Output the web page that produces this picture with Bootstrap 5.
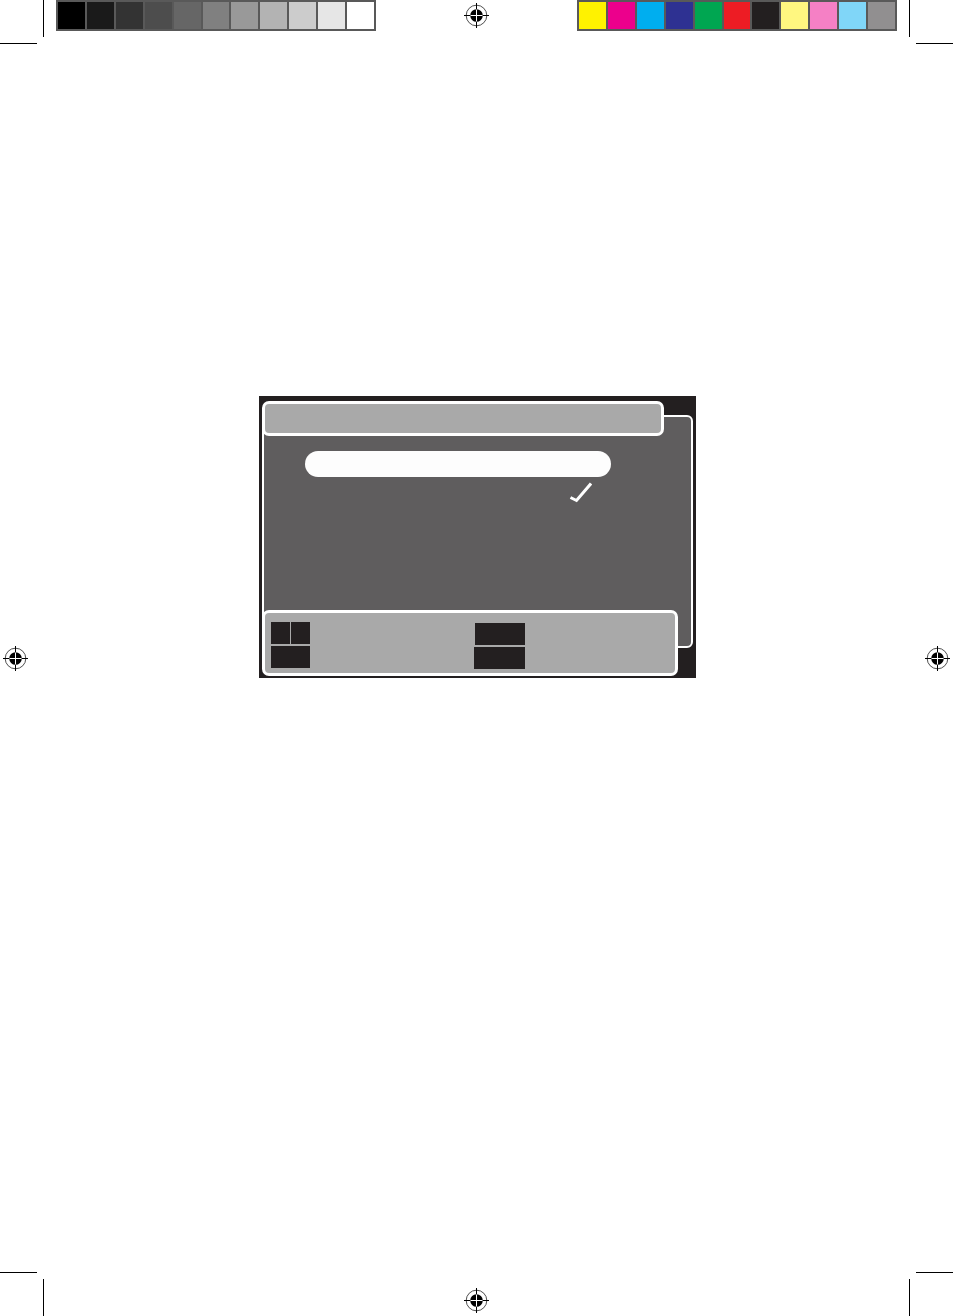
<!DOCTYPE html>
<html lang="en">
<head>
<meta charset="utf-8">
<meta name="viewport" content="width=device-width, initial-scale=1">
<title>Print sheet</title>
<link href="https://cdn.jsdelivr.net/npm/bootstrap@5.3.0/dist/css/bootstrap.min.css" rel="stylesheet">
<style>
body { background: #fff; font-family: "Liberation Sans", Arial, sans-serif; }
svg { display: block; flex: none; }
.sheet-head { height: 45px; }
.sheet-side { flex: 1 1 0; min-width: 0; gap: 12px; }
.strip { flex: 0 1 320px; min-width: 0; height: 31px; padding: 2px; gap: 2px; background: #595959; }
.strip > i { flex: 1 1 0; }
.reg-top { margin-top: 3px; }
.reg-bottom { margin-bottom: 3px; }
.sheet-main { padding: 0 3px; }
.screen { width: 437px; margin: 351px 0 0 2px; padding: 5px 3px 2px; background: #231f20; }
.bar { position: relative; z-index: 1; border: 3px solid #fff; border-radius: 7px; background: #a9a9a9; }
.title-bar { height: 35px; margin: 0 29px -21px 0; }
.panel { height: 233px; border: 2px solid #fff; border-radius: 6px; background: #5f5d5e; padding: 34px 80px 0 41px; }
.option { display: block; width: 100%; height: 26px; border: 0; border-radius: 13px; background: #fdfdfd; }
.tick { margin: 5px 19px 0 auto; }
.key-bar { height: 66px; margin: -38px 15px 0 0; padding: 9px 150px 0 6px; }
.keys { gap: 2px; }
.keys-right { padding-top: 1px; }
.keycap { height: 22px; background: #231f20; }
.key-s { width: 19px; }
.key-m { width: 39px; }
.key-l { width: 50px; }
.key-xl { width: 51px; }
</style>
</head>
<body>
<svg width="0" height="0" class="position-absolute" aria-hidden="true">
  <symbol id="reg" viewBox="0 0 25 25">
    <circle cx="12.500" cy="12.500" r="10.300" fill="none" stroke="#222" stroke-width=".8"/>
    <circle cx="12.500" cy="12.500" r="6.300" fill="#000"/>
    <path d="M12.500 0V25M0 12.500H25" stroke="#000"/>
    <path d="M12.500 6.500V18.500M6.500 12.500H18.500" stroke="#fff"/>
  </symbol>
  <symbol id="crop" viewBox="0 0 44 44"><path d="M43.500 0V37M0 43.500H37" stroke="#000"/></symbol>
</svg>
<div class="d-flex flex-column min-vh-100">
  <header class="sheet-head d-flex align-items-start">
    <div class="sheet-side d-flex align-items-start">
      <svg width="44" height="44"><use href="#crop"/></svg>
      <div class="strip d-flex">
        <i style="background:#000"></i><i style="background:#1a1a1a"></i><i style="background:#333"></i><i style="background:#4d4d4d"></i><i style="background:#666"></i><i style="background:#808080"></i><i style="background:#999"></i><i style="background:#b3b3b3"></i><i style="background:#ccc"></i><i style="background:#e6e6e6"></i><i style="background:#fff"></i>
      </div>
    </div>
    <svg class="reg-top" width="25" height="25"><use href="#reg"/></svg>
    <div class="sheet-side d-flex align-items-start justify-content-end">
      <div class="strip d-flex">
        <i style="background:#fff200"></i><i style="background:#ec008c"></i><i style="background:#00aeef"></i><i style="background:#2e3192"></i><i style="background:#00a651"></i><i style="background:#ed1c24"></i><i style="background:#231f20"></i><i style="background:#fff780"></i><i style="background:#f580c5"></i><i style="background:#80d6f8"></i><i style="background:#918f90"></i>
      </div>
      <svg width="44" height="44"><use href="#crop" transform="matrix(-1 0 0 1 44 0)"/></svg>
    </div>
  </header>

  <main class="sheet-main flex-grow-1 d-flex justify-content-between">
    <svg class="align-self-center" width="25" height="25"><use href="#reg"/></svg>
    <section class="screen align-self-start" aria-label="Menu screen">
      <div class="bar title-bar"></div>
      <div class="panel">
        <button type="button" class="option" aria-label="Selected option"></button>
        <svg class="tick" width="23" height="22" viewBox="0 0 23 22"><path d="M1.500 15.500L7.500 18.500L22 1.500" fill="none" stroke="#fff" stroke-width="3"/></svg>
      </div>
      <div class="bar key-bar d-flex justify-content-between align-items-start">
        <div class="keys d-flex flex-column">
          <div class="d-flex justify-content-between"><span class="keycap key-s"></span><span class="keycap key-s"></span></div>
          <span class="keycap key-m"></span>
        </div>
        <div class="keys keys-right d-flex flex-column align-items-end">
          <span class="keycap key-l"></span>
          <span class="keycap key-xl"></span>
        </div>
      </div>
    </section>
    <svg class="align-self-center" width="25" height="25"><use href="#reg"/></svg>
  </main>

  <footer class="d-flex justify-content-between align-items-end">
    <svg width="44" height="44"><use href="#crop" transform="matrix(1 0 0 -1 0 44)"/></svg>
    <svg class="reg-bottom" width="25" height="25"><use href="#reg"/></svg>
    <svg width="44" height="44"><use href="#crop" transform="matrix(-1 0 0 -1 44 44)"/></svg>
  </footer>
</div>
<script src="https://cdn.jsdelivr.net/npm/bootstrap@5.3.0/dist/js/bootstrap.bundle.min.js"></script>
</body>
</html>
